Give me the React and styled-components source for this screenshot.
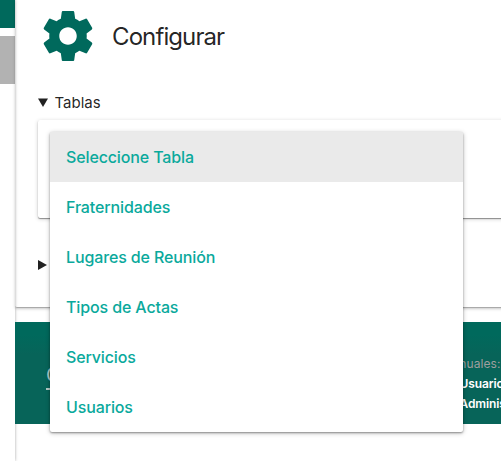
import React from "react";
import styled, { createGlobalStyle } from "styled-components";

const Global = createGlobalStyle`
  * { box-sizing: border-box; }
  html, body { margin: 0; overflow: hidden; background: #fff; }
  body { font-family: Inter, "Liberation Sans", sans-serif; color: rgba(0, 0, 0, 0.87); }
`;

const Page = styled.div`
  position: relative;
  display: flex;
  width: 501px;
  height: 461px;
  overflow: hidden;
`;

const Sidebar = styled.aside`
  position: relative;
  z-index: 1;
  flex: 0 0 15px;
  display: flex;
  flex-direction: column;
  gap: 8px;
  background: #fff;
  box-shadow: 0 0 3px rgba(0, 0, 0, 0.35);
`;

const SidebarHeader = styled.div`
  height: 28px;
  background: #00695c;
`;

const SidebarItem = styled.div`
  height: 48px;
  background: #b2b2b2;
`;

const Main = styled.main`
  position: relative;
  z-index: 1;
  flex: 1;
  min-width: 0;
  display: flex;
  flex-direction: column;
  gap: 14px;
`;

const Card = styled.section`
  width: 520px;
  height: 308px;
  flex: none;
  padding: 6px 0 0 23px;
  border-radius: 2px;
  border-bottom: 1px solid #aaa;
  box-shadow: 0 1px 3px rgba(0, 0, 0, 0.22);
`;

const Header = styled.header`
  display: flex;
  align-items: center;
  gap: 14px;
  height: 60px;
`;

const Gear = styled.svg`
  width: 60px;
  height: 60px;
  fill: #00695c;
`;

const Title = styled.h1`
  margin: 0;
  padding-top: 1px;
  font-size: 24px;
  line-height: 32px;
  font-weight: 400;
  letter-spacing: -0.9px;
`;

const Summary = styled.div`
  display: flex;
  align-items: center;
  gap: 7px;
  height: 20px;
  margin-top: ${(p) => p.$top}px;
  font-size: 15px;
`;

const SummaryLabel = styled.span`
  margin: -1px 0 0 -0.5px;
`;

const Arrow = styled.svg`
  width: 10px;
  height: 10px;
  fill: #212121;
`;

const Panel = styled.div`
  height: 98px;
  margin-top: 7px;
  border-radius: 2px;
  background: #fff;
  box-shadow: 0 1px 1px rgba(0, 0, 0, 0.38), 0 1px 4px rgba(0, 0, 0, 0.2);
`;

const Footer = styled.footer`
  display: flex;
  justify-content: space-between;
  height: 102px;
  padding: 32px 0 0 31px;
  background: linear-gradient(#00695c, #00695c 12%, #076459 32%, #076459);
`;

const Brand = styled.div`
  margin-top: 7px;
  color: #b2c9c5;
  font-size: 20px;
  line-height: 28px;
  text-decoration: underline;
  text-decoration-thickness: 2px;
  text-underline-offset: 6px;
`;

const Manuals = styled.div`
  width: 61px;
  font-size: 12px;
  line-height: 20px;
  font-weight: 600;
  letter-spacing: -0.1px;
  color: #fff;
  white-space: nowrap;
`;

const ManualsTitle = styled.div`
  margin-left: 1.5px;
  font-weight: 400;
  letter-spacing: 0.1px;
  color: #9e9e9e;
`;

const ManualLink = styled.div`
  margin-left: ${(p) => p.$left}px;
`;

const Menu = styled.ul`
  position: absolute;
  z-index: 2;
  left: 50px;
  top: 132px;
  width: 413px;
  height: 300px;
  margin: 0;
  padding: 0;
  list-style: none;
  border-radius: 2px;
  background: #fff;
  box-shadow: 0 1px 2px rgba(0, 0, 0, 0.35), 0 1px 5px rgba(0, 0, 0, 0.25);
`;

const Option = styled.li`
  height: 50px;
  padding: 0 16px;
  font-size: 16px;
  line-height: 51px;
  font-weight: 550;
  letter-spacing: -0.13px;
  color: #0aa99c;
  background: ${(p) => (p.$selected ? "#eaeaea" : "transparent")};
`;

const options = ["Seleccione Tabla", "Fraternidades", "Lugares de Reunión", "Tipos de Actas", "Servicios", "Usuarios"];

export default function App() {
  return (
    <>
      <Global />
      <Page>
        <Sidebar>
          <SidebarHeader />
          <SidebarItem />
        </Sidebar>
        <Main>
          <Card>
            <Header>
              <Gear viewBox="0 0 24 24">
                <path d="M19.43 12.98c.04-.32.07-.64.07-.98s-.03-.66-.07-.98l2.11-1.65c.19-.15.24-.42.12-.64l-2-3.46c-.12-.22-.39-.3-.61-.22l-2.49 1c-.52-.4-1.08-.73-1.69-.98l-.38-2.65C14.46 2.18 14.25 2 14 2h-4c-.25 0-.46.18-.49.42l-.38 2.65c-.61.25-1.17.59-1.69.98l-2.49-1c-.23-.09-.49 0-.61.22l-2 3.46c-.13.22-.07.49.12.64l2.11 1.65c-.04.32-.07.65-.07.98s.03.66.07.98l-2.11 1.65c-.19.15-.24.42-.12.64l2 3.46c.12.22.39.3.61.22l2.49-1c.52.4 1.08.73 1.69.98l.38 2.65c.03.24.24.42.49.42h4c.25 0 .46-.18.49-.42l.38-2.65c.61-.25 1.17-.59 1.69-.98l2.49 1c.23.09.49 0 .61-.22l2-3.46c.12-.22.07-.49-.12-.64l-2.11-1.65zM12 15.5c-1.93 0-3.5-1.57-3.5-3.5s1.57-3.5 3.5-3.5 3.5 1.57 3.5 3.5-1.57 3.5-3.5 3.5z" />
              </Gear>
              <Title>Configurar</Title>
            </Header>
            <Summary $top={27}>
              <Arrow viewBox="0 0 10 10"><path d="M0 .5h10L5 9z" /></Arrow>
              <SummaryLabel>Tablas</SummaryLabel>
            </Summary>
            <Panel />
            <Summary $top={37}>
              <Arrow viewBox="0 0 10 10"><path d="M0 0v10l9-5z" /></Arrow>
            </Summary>
          </Card>
          <Footer>
            <Brand>C</Brand>
            <Manuals>
              <ManualsTitle>Manuales:</ManualsTitle>
              <ManualLink $left={19.5}>Usuario</ManualLink>
              <ManualLink $left={19.5}>Administrador</ManualLink>
            </Manuals>
          </Footer>
        </Main>
        <Menu>
          {options.map((label, i) => (
            <Option key={label} $selected={i === 0}>{label}</Option>
          ))}
        </Menu>
      </Page>
    </>
  );
}
